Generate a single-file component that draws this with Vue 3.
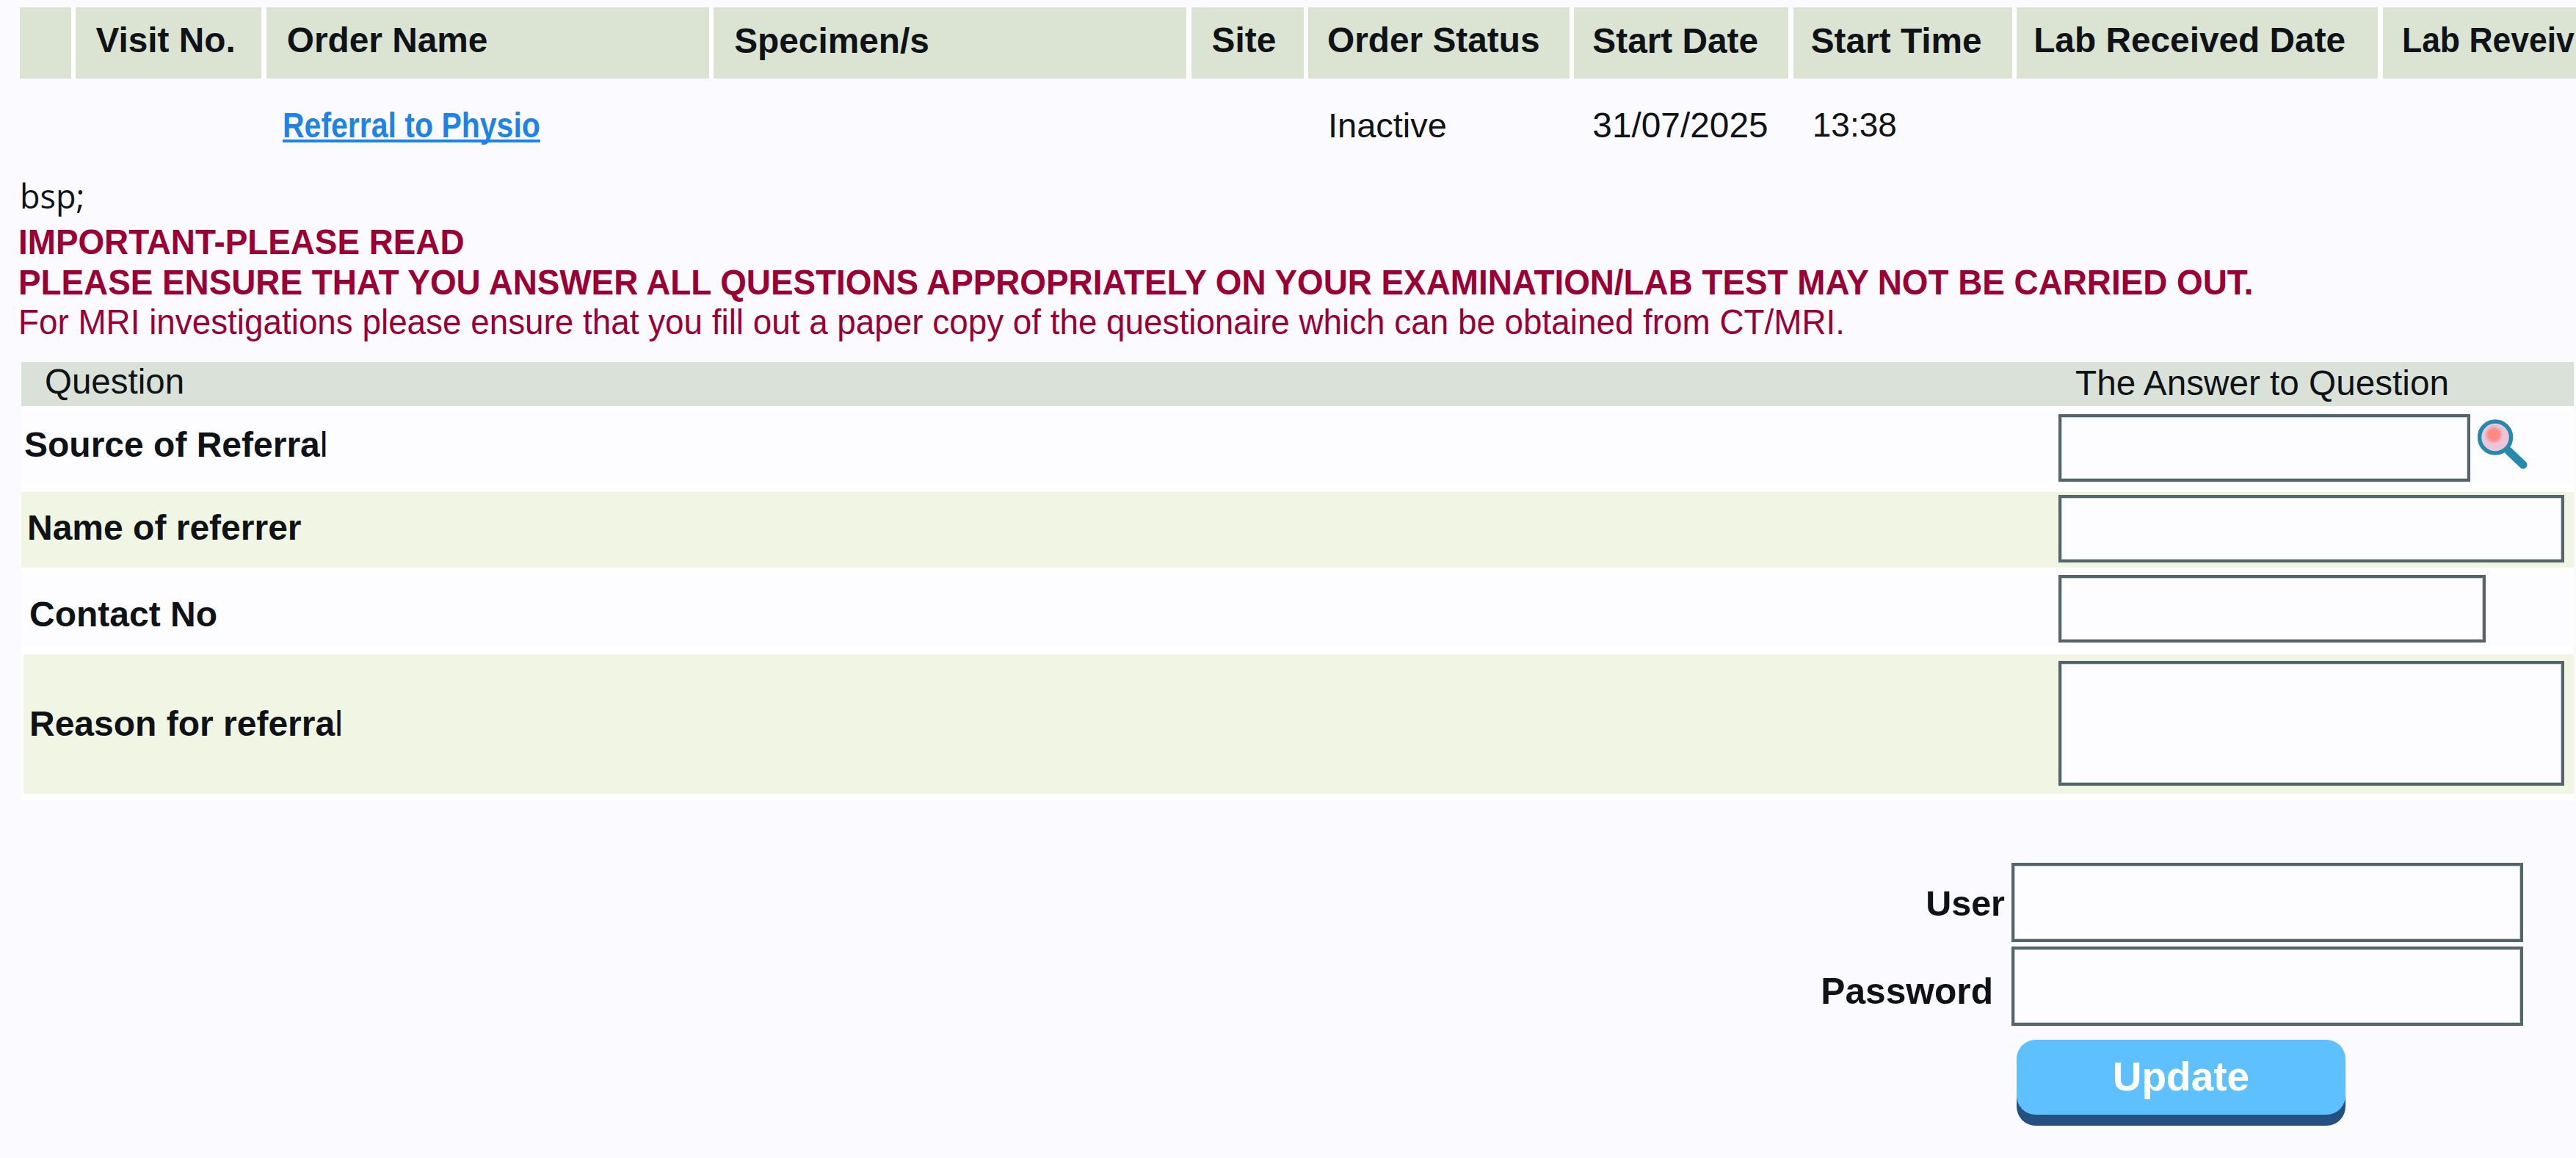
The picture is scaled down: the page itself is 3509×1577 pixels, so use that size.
<script setup>
const headers = [
  { text: '', w: 70, pad: 0 },
  { text: 'Visit No.', w: 253, pad: 27 },
  { text: 'Order Name', w: 603, pad: 28 },
  { text: 'Specimen/s', w: 644, pad: 28, low: true },
  { text: 'Site', w: 153, pad: 28 },
  { text: 'Order Status', w: 356, pad: 26 },
  { text: 'Start Date', w: 292, pad: 25, low: true },
  { text: 'Start Time', w: 298, pad: 24, low: true },
  { text: 'Lab Received Date', w: 492, pad: 23 },
  { text: 'Lab Reveiv', w: 263.4, pad: 26, fit: true },
]
const columns = headers.map((h) => h.w + 'px').join(' ')
</script>

<template>
  <div class="page">
    <div class="orders">
      <div class="order-head" :style="{ gridTemplateColumns: columns }">
        <div
          v-for="h in headers"
          :key="h.text"
          class="th"
          :class="{ low: h.low }"
          :style="{ paddingLeft: h.pad + 'px' }"
        ><span :class="{ fit: h.fit }">{{ h.text }}</span></div>
      </div>
      <div class="order-row" :style="{ gridTemplateColumns: columns }">
        <div></div>
        <div></div>
        <div class="td-link"><a class="link" href="#">Referral to Physio</a></div>
        <div></div>
        <div></div>
        <div class="td-status">Inactive</div>
        <div class="td-date">31/07/2025</div>
        <div class="td-time">13:38</div>
        <div></div>
        <div></div>
      </div>
    </div>

    <div class="stray">bsp;</div>
    <div class="notice">
      <div class="strong">IMPORTANT-PLEASE READ</div>
      <div class="strong">PLEASE ENSURE THAT YOU ANSWER ALL QUESTIONS APPROPRIATELY ON YOUR EXAMINATION/LAB TEST MAY NOT BE CARRIED OUT.</div>
      <div class="plain">For MRI investigations please ensure that you fill out a paper copy of the questionaire which can be obtained from CT/MRI.</div>
    </div>

    <div class="questions">
      <div class="q-head">
        <span class="q-title">Question</span>
        <span class="a-title">The Answer to Question</span>
      </div>

      <div class="q-row r1">
        <div class="q-label l1">Source of Referra<span class="thin">l</span></div>
        <div class="answer">
          <input class="field f1" type="text" />
          <svg class="lens" viewBox="0 0 68 68" width="68" height="68" aria-hidden="true">
            <defs>
              <radialGradient id="glow">
                <stop offset="0.55" stop-color="#ff8a82" />
                <stop offset="1" stop-color="#ebc6db" />
              </radialGradient>
            </defs>
            <line x1="42" y1="43" x2="62" y2="62" stroke="#2489ac" stroke-width="11" stroke-linecap="round" />
            <circle cx="24" cy="24.5" r="21.5" fill="#ebc6db" stroke="#2489ac" stroke-width="5.5" />
            <circle cx="22" cy="21" r="13" fill="url(#glow)" />
          </svg>
        </div>
      </div>

      <div class="q-row r2">
        <div class="q-label l2">Name of referrer</div>
        <div class="answer"><input class="field f2" type="text" /></div>
      </div>

      <div class="q-row r3">
        <div class="q-label l3">Contact No</div>
        <div class="answer"><input class="field f3" type="text" /></div>
      </div>

      <div class="q-row r4">
        <div class="q-label l4">Reason for referra<span class="thin">l</span></div>
        <div class="answer"><textarea class="field f4"></textarea></div>
      </div>
    </div>

    <div class="login">
      <div class="login-row">
        <label class="login-label user">User</label>
        <input class="field login-input" type="text" />
      </div>
      <div class="login-row">
        <label class="login-label pass">Password</label>
        <input class="field login-input" type="password" />
      </div>
      <button class="update" type="button">Update</button>
    </div>
  </div>
</template>

<style scoped>
.page {
  width: 3509px;
  height: 1577px;
  overflow: hidden;
  background: #fbfbff;
  color: #0f1318;
  font-family: "Liberation Sans", Arial, sans-serif;
  font-size: 47.5px;
  line-height: 55px;
  padding-top: 10px;
  box-sizing: border-box;
}
.order-head {
  display: grid;
  column-gap: 6.4px;
  margin-left: 27px;
  height: 97px;
  background: #ffffff;
  width: 3482px;
}
.th {
  background: #dbe4d3;
  font-weight: 700;
  font-size: 47.8px;
  box-sizing: border-box;
  padding-top: 17px;
  white-space: nowrap;
  overflow: hidden;
}
.th.low {
  padding-top: 18px;
}
.fit {
  display: inline-block;
  transform: scaleX(0.93);
  transform-origin: left center;
}
.order-row {
  display: grid;
  column-gap: 6.4px;
  margin-left: 27px;
  height: 105px;
  padding-top: 36px;
  box-sizing: border-box;
}
.td-link { padding-left: 22px; }
.td-status { padding-left: 27px; font-size: 47px; }
.td-date { padding-left: 25px; font-size: 47.8px; }
.td-time { padding-left: 26px; font-size: 46px; }
.link {
  display: inline-block;
  color: #1f83e6;
  font-weight: 700;
  font-size: 48px;
  transform: scaleX(0.854);
  transform-origin: left center;
  text-decoration: underline;
  text-decoration-thickness: 4px;
  text-underline-offset: 3px;
  text-decoration-skip-ink: none;
  white-space: nowrap;
}
.stray {
  font-family: "Open Sans", sans-serif;
  font-size: 45px;
  line-height: 60px;
  margin-left: 27px;
  margin-top: 25px;
}
.notice {
  margin-left: 24.5px;
  color: #9a0034;
  margin-top: 6px;
  line-height: 54.5px;
  white-space: nowrap;
}
.strong,
.plain {
  width: max-content;
  transform: scaleX(0.9645);
  transform-origin: left center;
}
.strong { font-weight: 700; }
.questions {
  margin-top: 26px;
  background: #ffffff;
  margin-left: 29px;
  width: 3477px;
  height: 597px;
  display: flex;
  flex-direction: column;
}
.q-head {
  height: 60px;
  background: #dae1d9;
  display: flex;
  position: relative;
}
.q-title {
  margin-left: 32px;
  line-height: 54px;
}
.a-title {
  margin-left: auto;
  margin-right: 170px;
  font-size: 47.7px;
  line-height: 57px;
}
.q-row {
  display: flex;
  justify-content: space-between;
}
.r1 { height: 102px; margin-top: 6px; background: #fdfcff; }
.r2 { height: 103px; margin-top: 9px; background: #f1f5e4; }
.r3 { height: 101px; margin-top: 6px; background: #fdfcff; }
.r4 { height: 190px; margin-top: 11px; margin-left: 3px; background: #f1f5e4; }
.q-label {
  font-weight: 700;
  font-size: 48px;
  white-space: nowrap;
}
.thin { font-weight: 400; }
.l1 { padding: 19px 0 0 4px; }
.l2 { padding: 21px 0 0 8px; }
.l3 { padding: 30px 0 0 11px; }
.l4 { padding: 67px 0 0 8px; }
.answer {
  width: 702px;
  display: flex;
  align-items: flex-start;
  flex: none;
  position: relative;
}
.field {
  box-sizing: border-box;
  border: 4px solid #55646a;
  background: #fdfcff;
  box-shadow: inset 0 0 0 1px #c9d0d3;
  padding: 0;
  margin: 0;
  display: block;
  resize: none;
  outline: none;
  border-radius: 0;
}
.f1 { width: 561px; height: 92px; margin-top: 5px; }
.f2 { width: 689px; height: 92px; margin-top: 4px; }
.f3 { width: 582px; height: 92px; margin-top: 4px; }
.f4 { width: 689px; height: 170px; margin-top: 9px; }
.lens { flex: none; margin: 12px 0 0 10px; }
.login {
  margin-top: 85px;
  margin-left: 2740px;
  width: 697px;
  display: flex;
  flex-direction: column;
  gap: 6px;
}
.login-row {
  position: relative;
  height: 108px;
}
.login-input {
  width: 697px;
  height: 108px;
}
.login-label {
  position: absolute;
  right: 100%;
  white-space: nowrap;
  font-weight: 700;
}
.user { top: 28px; padding-right: 9px; font-size: 48.5px; }
.pass { top: 34px; padding-right: 25px; font-size: 49.7px; }
.update {
  margin: 13px 0 0 7px;
  width: 448px;
  height: 102px;
  border: none;
  border-radius: 26px;
  background: #5ec0fe;
  box-shadow: 0 15px 0 #245082;
  color: #ffffff;
  font-family: "Liberation Sans", Arial, sans-serif;
  font-weight: 700;
  font-size: 55px;
  padding: 0 0 1px;
}
</style>

<style>
html, body {
  margin: 0;
  background: #fbfbff;
}
</style>
